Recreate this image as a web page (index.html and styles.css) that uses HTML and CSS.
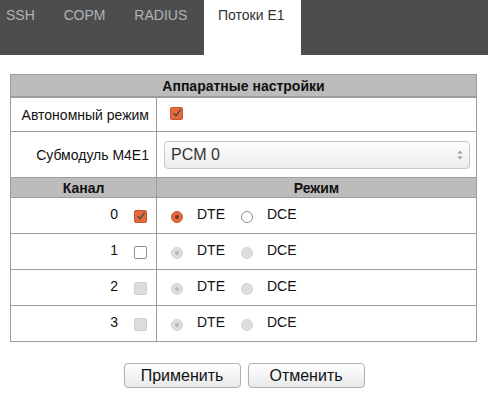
FILE: index.html
```html
<!DOCTYPE html>
<html>
<head>
<meta charset="utf-8">
<link rel="stylesheet" href="styles.css">
</head>
<body>
<nav class="tabs">
  <span class="tab">SSH</span>
  <span class="tab">СОРМ</span>
  <span class="tab">RADIUS</span>
  <span class="tab active">Потоки Е1</span>
</nav>
<main class="content">
  <table class="grid">
    <tr class="hdr"><th colspan="2">Аппаратные настройки</th></tr>
    <tr class="r-auto">
      <td class="lbl">Автономный режим</td>
      <td class="val"><span class="cb on"><svg viewBox="0 0 12 12" width="12" height="12"><path d="M2.6 6.2 L5 8.6 L9.6 2.8" fill="none" stroke="#5a4a44" stroke-width="1.5"/></svg></span></td>
    </tr>
    <tr class="r-sub">
      <td class="lbl">Субмодуль М4Е1</td>
      <td class="val">
        <div class="select"><span>PCM 0</span>
          <svg class="arr" viewBox="0 0 8 14" width="8" height="14"><path d="M1.5 5.5 L4 2.5 L6.5 5.5Z M1.5 8.5 L4 11.5 L6.5 8.5Z" fill="#999"/></svg>
        </div>
      </td>
    </tr>
    <tr class="hdr2"><th>Канал</th><th>Режим</th></tr>
    <tr class="ch">
      <td><div class="num"><span>0</span><span class="cb on"><svg viewBox="0 0 12 12" width="12" height="12"><path d="M2.6 6.2 L5 8.6 L9.6 2.8" fill="none" stroke="#5a4a44" stroke-width="1.5"/></svg></span></div></td>
      <td><div class="mode"><span class="rb on"></span><span class="mt">DTE</span><span class="rb"></span><span class="mt">DCE</span></div></td>
    </tr>
    <tr class="ch">
      <td><div class="num"><span>1</span><span class="cb"></span></div></td>
      <td><div class="mode"><span class="rb dis sel"></span><span class="mt">DTE</span><span class="rb dis"></span><span class="mt">DCE</span></div></td>
    </tr>
    <tr class="ch">
      <td><div class="num"><span>2</span><span class="cb dis"></span></div></td>
      <td><div class="mode"><span class="rb dis sel"></span><span class="mt">DTE</span><span class="rb dis"></span><span class="mt">DCE</span></div></td>
    </tr>
    <tr class="ch">
      <td><div class="num"><span>3</span><span class="cb dis"></span></div></td>
      <td><div class="mode"><span class="rb dis sel"></span><span class="mt">DTE</span><span class="rb dis"></span><span class="mt">DCE</span></div></td>
    </tr>
  </table>
  <div class="actions">
    <button class="btn">Применить</button>
    <button class="btn">Отменить</button>
  </div>
</main>
</body>
</html>
```

FILE: styles.css
```css
html, body {
  margin: 0;
  padding: 0;
  background: #fff;
  font-family: "Liberation Sans", Arial, sans-serif;
  color: #111;
}
.tabs {
  display: flex;
  height: 55px;
  background: #4d4d4d;
  padding-left: 6px;
}
.tab {
  font-size: 14px;
  color: #aeb3b8;
  line-height: 16px;
  padding-top: 7px;
  margin-right: 29px;
}
.tab.active {
  margin-left: -12px;
  width: 97px;
  background: #fff;
  color: #333;
  text-align: center;
  padding-right: 3px;
  box-sizing: border-box;
}
.content {
  padding: 19px 0 0 10px;
}
.grid {
  width: 467px;
  border-collapse: collapse;
  font-size: 14px;
}
.grid th, .grid td {
  border: 1px solid #9d9d9d;
  padding: 0;
}
.hdr th {
  background: #bcbcbc;
  height: 21px;
  font-weight: bold;
  border-bottom: 2px solid #9d9d9d;
}
.hdr2 th {
  background: #bcbcbc;
  height: 19px;
  font-weight: bold;
  line-height: 16px;
}
.lbl {
  width: 138px;
  text-align: right;
  padding-right: 7px !important;
}
.r-auto td { height: 33px; }
.r-sub td { height: 45px; }
.val { padding-left: 7px !important; }
.r-auto .cb { margin-left: 6px; }
.select {
  display: flex;
  align-items: center;
  justify-content: space-between;
  width: 306px;
  height: 28px;
  box-sizing: border-box;
  border: 1px solid #c8c8c8;
  border-radius: 4px;
  background: linear-gradient(#fdfdfd, #ececec);
  padding: 0 5px 0 6px;
  font-size: 16px;
  color: #333;
}
.select .arr { display: block; }
.ch td { height: 35px; vertical-align: top; }
.num {
  display: flex;
  justify-content: flex-end;
  align-items: flex-start;
  padding: 8px 9px 0 0;
  gap: 16px;
}
.num .cb { margin-top: 4px; }
.mode {
  display: flex;
  align-items: flex-start;
  padding: 8px 0 0 14px;
}
.mode .rb { margin-top: 5px; }
.mt { margin-left: 14px; margin-right: 16px; }
.cb {
  display: inline-block;
  width: 13px;
  height: 13px;
  box-sizing: border-box;
  border: 1px solid #8e8e8e;
  border-radius: 2px;
  background: #fff;
  position: relative;
}
.cb svg { display: block; margin: -1px 0 0 0; }
.cb.on {
  background: #e56b3e;
  border-color: #c4572f;
}
.cb.dis {
  background: #dcdcdc;
  border-color: #d0d0d0;
}
.rb {
  display: inline-block;
  width: 12px;
  height: 12px;
  box-sizing: border-box;
  border-radius: 50%;
  border: 1px solid #8f8f8f;
  background: #fff;
  position: relative;
  flex: none;
}
.rb.on {
  background: #e56b3e;
  border-color: #c75a31;
}
.rb.on::after, .rb.sel::after {
  content: "";
  position: absolute;
  left: 3px;
  top: 3px;
  width: 4px;
  height: 4px;
  border-radius: 50%;
  background: #6a3a28;
}
.rb.dis {
  background: #dedede;
  border-color: #d2d2d2;
}
.rb.dis.sel::after {
  background: #b8b8b8;
}
.actions {
  display: flex;
  justify-content: center;
  gap: 7px;
  margin: 21px 0 0 -10px;
}
.btn {
  width: 117px;
  height: 25px;
  font-family: "Liberation Sans", Arial, sans-serif;
  font-size: 16px;
  color: #111;
  border: 1px solid #b0b0b0;
  border-radius: 4px;
  background: linear-gradient(#ffffff, #e9e9e9);
  padding: 0;
}
```
